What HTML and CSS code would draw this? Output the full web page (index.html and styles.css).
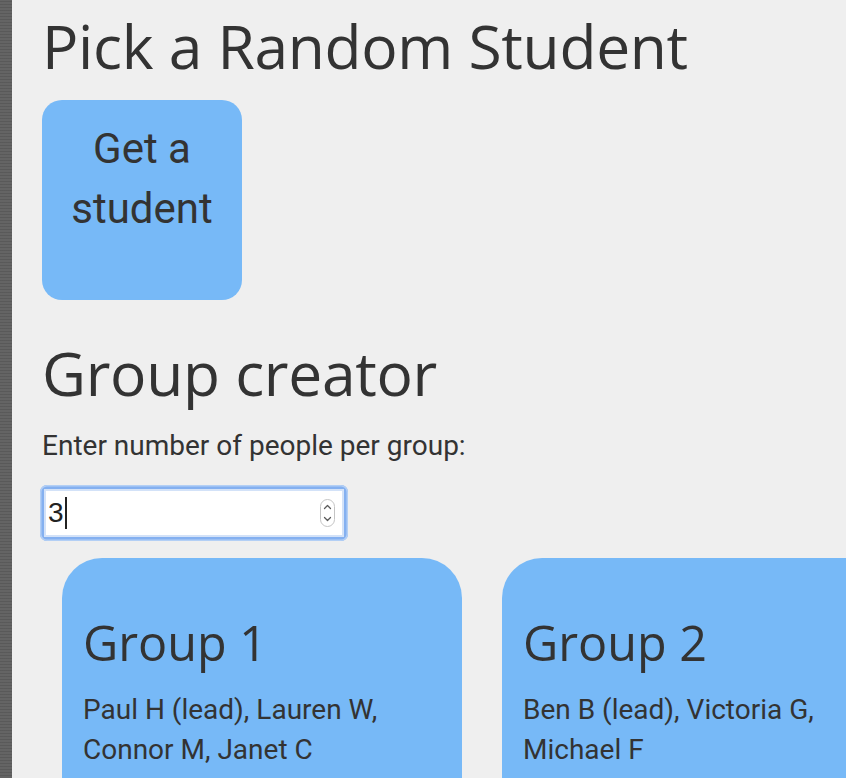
FILE: index.html
```html
<!DOCTYPE html>
<html lang="en">
<head>
<meta charset="utf-8">
<title>Pick a Random Student</title>
<link rel="stylesheet" href="styles.css">
</head>
<body>
<div class="frame">
  <div class="edge"></div>
  <main class="content">
    <h1 class="title">Pick a Random Student</h1>
    <button class="pick-btn" type="button">Get a student</button>
    <h1 class="title title-groups">Group creator</h1>
    <label class="label">Enter number of people per group:</label>
    <div class="field">
      <div class="field-box">
        <span class="field-value">3</span><span class="caret"></span>
        <span class="spacer"></span>
        <svg class="spinner" width="15" height="28" viewBox="0 0 15 28">
          <rect x="0.5" y="0.5" width="14" height="27" rx="7" fill="#fff" stroke="#c4c4c4"/>
          <path d="M4.5 9.5 L7.5 6.5 L10.5 9.5" fill="none" stroke="#5a5a5a" stroke-width="1.3" stroke-linecap="round" stroke-linejoin="round"/>
          <path d="M4.5 18.5 L7.5 21.5 L10.5 18.5" fill="none" stroke="#5a5a5a" stroke-width="1.3" stroke-linecap="round" stroke-linejoin="round"/>
        </svg>
      </div>
    </div>
    <div class="groups">
      <section class="group">
        <h2 class="group-title">Group 1</h2>
        <p class="group-members">Paul H (lead), Lauren W, Connor M, Janet C</p>
      </section>
      <section class="group">
        <h2 class="group-title">Group 2</h2>
        <p class="group-members">Ben B (lead), Victoria G, Michael F</p>
      </section>
    </div>
  </main>
</div>
</body>
</html>
```

FILE: styles.css
```css
html, body {
  margin: 0;
  padding: 0;
  height: 100%;
  overflow: hidden;
  background: #efefef;
}

.frame {
  display: flex;
  height: 100%;
}

.edge {
  flex: 0 0 12px;
  background: #5e5e5e;
  background-image: repeating-linear-gradient(0deg, rgba(255,255,255,0.04) 0 2px, rgba(0,0,0,0.05) 2px 3px);
}

.content {
  flex: 1;
  padding-left: 30px;
  min-width: 0;
  font-family: Roboto, "Liberation Sans", sans-serif;
  color: #333;
  font-size: 28px;
  line-height: 40px;
}

.title {
  font-family: "Open Sans", "DejaVu Sans", sans-serif;
  font-weight: 400;
  font-size: 60.5px;
  line-height: 70px;
  margin: 11px 0 19px;
  letter-spacing: -0.3px;
}

.title-groups {
  margin-top: 38px;
  margin-bottom: 18px;
}

.pick-btn {
  display: block;
  width: 200px;
  box-sizing: border-box;
  border: none;
  border-radius: 20px;
  background: #77b9f7;
  color: #333;
  font-family: Roboto, "Liberation Sans", sans-serif;
  font-size: 42px;
  line-height: 60px;
  padding: 19px 20px 61px;
  text-align: center;
}

.label {
  display: block;
  margin-bottom: 19px;
}

.field {
  width: 308px;
  height: 56px;
  box-sizing: border-box;
  margin-left: -2px;
  padding: 4px;
  border-radius: 7px;
  background: #84b0f0;
  box-shadow: inset 0 0 0 1.5px #b3cff5;
}

.field-box {
  display: flex;
  align-items: center;
  height: 48px;
  box-sizing: border-box;
  padding: 0 9px 0 4px;
  background: #fff;
  box-shadow: inset 0 0 0 2px #d3e2f8;
  font-family: "Liberation Sans", Arial, sans-serif;
  font-size: 28px;
  color: #222;
}

.caret {
  display: inline-block;
  width: 2px;
  height: 32px;
  background: #222;
  margin-left: 1px;
}

.spacer {
  flex: 1;
}

.spinner {
  display: block;
}

.groups {
  display: flex;
  gap: 40px;
  margin: 17px 0 0 20px;
}

.group {
  flex: 0 0 400px;
  box-sizing: border-box;
  height: 280px;
  background: #77b9f7;
  border-radius: 40px;
  padding: 54px 20px 20px 21px;
}

.group-title {
  font-family: "Open Sans", "DejaVu Sans", sans-serif;
  font-weight: 400;
  font-size: 48.5px;
  line-height: 60px;
  margin: 0 0 18px;
}

.group-members {
  margin: 0;
}
```
